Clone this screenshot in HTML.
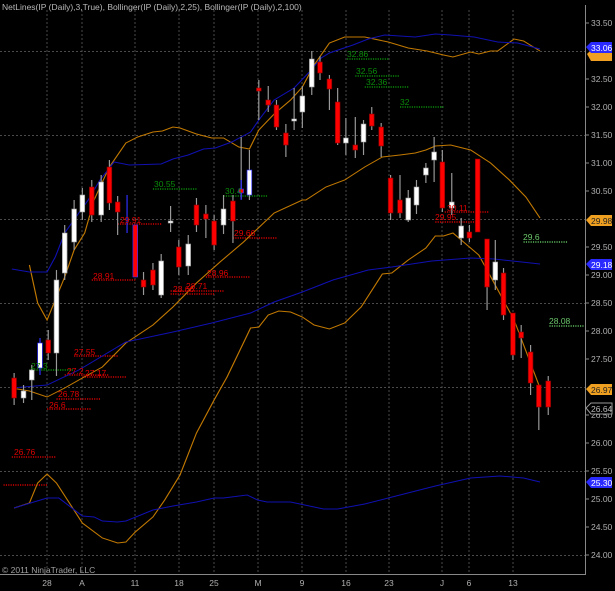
<!DOCTYPE html>
<html><head><meta charset="utf-8"><style>
html,body{margin:0;padding:0;background:#000;}
svg{display:block;font-family:"Liberation Sans",sans-serif;}
</style></head><body>
<svg width="615" height="591" viewBox="0 0 615 591" xmlns="http://www.w3.org/2000/svg">
<rect width="615" height="591" fill="#000"/>
<!-- grid -->
<g stroke="#4a4a4a" stroke-width="1" stroke-dasharray="2,2">
<line x1="47" y1="10" x2="47" y2="574"/><line x1="82" y1="10" x2="82" y2="574"/><line x1="135" y1="10" x2="135" y2="574"/><line x1="179" y1="10" x2="179" y2="574"/><line x1="214" y1="10" x2="214" y2="574"/><line x1="258" y1="10" x2="258" y2="574"/><line x1="302" y1="10" x2="302" y2="574"/><line x1="346" y1="10" x2="346" y2="574"/><line x1="389" y1="10" x2="389" y2="574"/><line x1="442" y1="10" x2="442" y2="574"/><line x1="469" y1="10" x2="469" y2="574"/><line x1="513" y1="10" x2="513" y2="574"/>
<line x1="0" y1="51.5" x2="585" y2="51.5"/><line x1="0" y1="135.5" x2="585" y2="135.5"/><line x1="0" y1="219.5" x2="585" y2="219.5"/><line x1="0" y1="303.5" x2="585" y2="303.5"/><line x1="0" y1="387.5" x2="585" y2="387.5"/><line x1="0" y1="471.5" x2="585" y2="471.5"/><line x1="0" y1="555.5" x2="585" y2="555.5"/>
</g>
<line x1="585.5" y1="5" x2="585.5" y2="575" stroke="#888"/>
<line x1="0" y1="574.5" x2="586" y2="574.5" stroke="#888"/>
<g transform="scale(1.17647,1)">
<!-- netlines dotted -->
<g stroke-width="1.5" stroke-dasharray="1,1" fill="none">
<g stroke="#d00000">
<line x1="100" y1="224" x2="138" y2="224"/><line x1="198" y1="238" x2="235" y2="238"/><line x1="78" y1="280" x2="115" y2="280"/><line x1="175" y1="277" x2="212" y2="277"/><line x1="145" y1="291" x2="190" y2="291"/><line x1="145" y1="294" x2="182" y2="294"/><line x1="63" y1="356" x2="100" y2="356"/><line x1="55" y1="375" x2="92" y2="375"/><line x1="70" y1="377" x2="107" y2="377"/><line x1="48" y1="399" x2="86" y2="399"/><line x1="40" y1="409" x2="78" y2="409"/><line x1="10" y1="457" x2="48" y2="457"/><line x1="3" y1="485" x2="40" y2="485"/><line x1="378" y1="212" x2="415" y2="212"/><line x1="370" y1="222" x2="405" y2="222"/>
</g>
<g stroke="#0a8a0a">
<line x1="295" y1="59" x2="331" y2="59"/><line x1="302" y1="76" x2="340" y2="76"/><line x1="310" y1="87" x2="348" y2="87"/><line x1="340" y1="107" x2="377" y2="107"/><line x1="130" y1="189" x2="168" y2="189"/><line x1="190" y1="196" x2="227" y2="196"/><line x1="25" y1="370" x2="62" y2="370"/>
</g>
<g stroke="#5cb85c"><line x1="445" y1="242" x2="482" y2="242"/><line x1="467" y1="326" x2="497" y2="326"/></g>
</g>
<!-- bands -->
<g fill="none" stroke-width="1">
<polyline stroke="#c07800" points="25,265 32,303 40,320 48,297 55,277 63,250 72,233 80,200 85,187 93,167 107,143 117,137 130,132 138,131 147,127 153,128 167,134 180,138 190,138 203,147 212,149 220,130 233,114 247,100 257,87 267,65 280,43 293,37 310,37 330,42 347,48 363,51 377,55 385,57 400,52 407,54 417,51 423,51 437,39 445,41 459,51"/>
<polyline stroke="#c07800" points="10,388 25,391 40,397 55,388 70,378 87,367 107,343 130,325 147,307 167,283 187,262 207,242 233,213 257,200 260,200 277,187 293,180 310,167 325,157 340,155 353,153 362,150 370,146 383,145 400,150 417,163 433,180 447,197 459,218"/>
<polyline stroke="#c07800" points="12,508 25,503 32,483 40,474 48,483 70,523 87,538 100,543 107,542 115,532 130,517 140,500 153,475 167,433 182,400 193,377 213,328 220,327 228,315 237,311 247,312 257,317 267,325 280,329 293,323 307,307 325,274 333,273 347,260 362,248 370,236 377,236 385,233 407,255 420,283 437,320 459,388"/>
<polyline stroke="#1010b0" points="10,269 25,272 40,272 47,257 55,233 67,213 75,200 85,180 97,162 110,165 137,164 147,159 160,155 173,149 183,148 197,142 213,132 220,120 233,100 250,88 263,72 273,58 280,53 300,45 313,39 327,35 353,37 370,34 383,35 403,37 423,42 440,43 459,49"/>
<polyline stroke="#1010b0" points="10,388 40,385 67,370 107,342 127,337 147,332 180,323 213,313 233,302 257,292 283,280 313,270 333,267 367,261 400,258 420,259 459,264"/>
<polyline stroke="#1010b0" points="12,508 40,498 50,498 70,516 80,517 87,521 100,522 107,521 130,510 147,506 167,502 182,498 190,498 210,495 219,500 227,502 247,502 263,506 275,509 287,509 310,504 330,498 370,486 400,478 425,476 445,478 459,482"/>
</g>
<!-- wicks -->
<g stroke="#9a9a9a" stroke-width="1">
<line x1="12" y1="373" x2="12" y2="405"/><line x1="20" y1="385" x2="20" y2="403"/><line x1="27" y1="365" x2="27" y2="400"/><line x1="41" y1="330" x2="41" y2="360"/><line x1="48" y1="270" x2="48" y2="376"/><line x1="55" y1="225" x2="55" y2="280"/><line x1="63" y1="200" x2="63" y2="250"/><line x1="70" y1="188" x2="70" y2="220"/><line x1="78" y1="180" x2="78" y2="222"/><line x1="86" y1="175" x2="86" y2="222"/><line x1="93" y1="160" x2="93" y2="210"/><line x1="100" y1="196" x2="100" y2="235"/><line x1="122" y1="272" x2="122" y2="295"/><line x1="130" y1="263" x2="130" y2="290"/><line x1="137" y1="254" x2="137" y2="298"/><line x1="145" y1="206" x2="145" y2="232"/><line x1="152" y1="240" x2="152" y2="275"/><line x1="160" y1="235" x2="160" y2="275"/><line x1="167" y1="198" x2="167" y2="232"/><line x1="175" y1="205" x2="175" y2="238"/><line x1="182" y1="215" x2="182" y2="250"/><line x1="190" y1="195" x2="190" y2="234"/><line x1="198" y1="195" x2="198" y2="243"/><line x1="205" y1="137" x2="205" y2="199"/><line x1="212" y1="150" x2="212" y2="200"/><line x1="220" y1="80" x2="220" y2="120"/><line x1="228" y1="86" x2="228" y2="112"/><line x1="235" y1="100" x2="235" y2="130"/><line x1="243" y1="124" x2="243" y2="157"/><line x1="250" y1="88" x2="250" y2="130"/><line x1="257" y1="86" x2="257" y2="128"/><line x1="265" y1="51" x2="265" y2="95"/><line x1="272" y1="56" x2="272" y2="80"/><line x1="280" y1="75" x2="280" y2="110"/><line x1="287" y1="88" x2="287" y2="145"/><line x1="294" y1="118" x2="294" y2="155"/><line x1="302" y1="117" x2="302" y2="158"/><line x1="309" y1="120" x2="309" y2="155"/><line x1="316" y1="107" x2="316" y2="130"/><line x1="324" y1="123" x2="324" y2="157"/><line x1="332" y1="175" x2="332" y2="220"/><line x1="340" y1="175" x2="340" y2="218"/><line x1="347" y1="190" x2="347" y2="222"/><line x1="354" y1="180" x2="354" y2="214"/><line x1="362" y1="163" x2="362" y2="183"/><line x1="369" y1="137" x2="369" y2="182"/><line x1="376" y1="150" x2="376" y2="212"/><line x1="384" y1="173" x2="384" y2="215"/><line x1="392" y1="218" x2="392" y2="245"/><line x1="399" y1="225" x2="399" y2="242"/><line x1="414" y1="239" x2="414" y2="310"/><line x1="421" y1="240" x2="421" y2="290"/><line x1="428" y1="268" x2="428" y2="320"/><line x1="436" y1="313" x2="436" y2="360"/><line x1="443" y1="325" x2="443" y2="358"/><line x1="451" y1="345" x2="451" y2="395"/><line x1="458" y1="385" x2="458" y2="430"/><line x1="466" y1="376" x2="466" y2="415"/>
<line x1="108" y1="195" x2="108" y2="233" stroke="#3030ff"/><line x1="34" y1="338" x2="34" y2="375" stroke="#3030ff"/><line x1="205" y1="180" x2="205" y2="200" stroke="#3030ff"/>
</g>
<!-- bodies -->
<g stroke-width="0.6">
<g fill="#ff0000" stroke="#800">
<rect x="10" y="378" width="4" height="20"/><rect x="39" y="340" width="4" height="13"/><rect x="76" y="187" width="4" height="28"/><rect x="91" y="167" width="4" height="36"/><rect x="98" y="202" width="4" height="10"/><rect x="120" y="280" width="4" height="7"/><rect x="128" y="270" width="4" height="15"/><rect x="150" y="247" width="4" height="20"/><rect x="165" y="205" width="4" height="20"/><rect x="173" y="214" width="4" height="5"/><rect x="180" y="221" width="4" height="24"/><rect x="196" y="201" width="4" height="20"/><rect x="218" y="88" width="4" height="3"/><rect x="226" y="100" width="4" height="5"/><rect x="233" y="105" width="4" height="22"/><rect x="241" y="133" width="4" height="12"/><rect x="270" y="62" width="4" height="11"/><rect x="278" y="79" width="4" height="10"/><rect x="285" y="102" width="4" height="41"/><rect x="300" y="145" width="4" height="5"/><rect x="314" y="114" width="4" height="12"/><rect x="322" y="127" width="4" height="19"/><rect x="330" y="178" width="4" height="35"/><rect x="338" y="200" width="4" height="13"/><rect x="374" y="162" width="4" height="46"/><rect x="397" y="232" width="4" height="6"/><rect x="404" y="159" width="4" height="73"/><rect x="412" y="239" width="4" height="48"/><rect x="426" y="273" width="4" height="42"/><rect x="434" y="313" width="4" height="42"/><rect x="441" y="332" width="4" height="6"/><rect x="449" y="352" width="4" height="31"/><rect x="456" y="385" width="4" height="22"/><rect x="464" y="381" width="4" height="26"/>
<rect x="113" y="225" width="4" height="52" stroke="#3030ff"/><rect x="203" y="189" width="4" height="4" stroke="#3030ff"/>
</g>
<g fill="#ffffff" stroke="#999">
<rect x="18" y="391" width="4" height="7"/><rect x="25" y="370" width="4" height="10"/><rect x="46" y="280" width="4" height="73"/><rect x="53" y="233" width="4" height="40"/><rect x="61" y="209" width="4" height="33"/><rect x="68" y="195" width="4" height="17"/><rect x="84" y="182" width="4" height="33"/><rect x="135" y="261" width="4" height="34"/><rect x="143" y="221" width="4" height="2"/><rect x="158" y="244" width="4" height="22"/><rect x="188" y="209" width="4" height="16"/><rect x="248" y="119" width="4" height="2"/><rect x="255" y="96" width="4" height="16"/><rect x="263" y="59" width="4" height="28"/><rect x="292" y="138" width="4" height="5"/><rect x="307" y="124" width="4" height="18"/><rect x="345" y="198" width="4" height="22"/><rect x="352" y="187" width="4" height="18"/><rect x="360" y="168" width="4" height="7"/><rect x="367" y="152" width="4" height="8"/><rect x="382" y="202" width="4" height="6"/><rect x="390" y="226" width="4" height="12"/><rect x="419" y="262" width="4" height="18"/>
<rect x="32" y="343" width="4" height="25" stroke="#3030ff"/><rect x="210" y="170" width="4" height="25" stroke="#3030ff"/>
</g>
</g>
</g>
<!-- netline labels -->
<g font-size="8.5" fill="#e00000">
<text x="120" y="223">29.91</text><text x="234" y="236">29.66</text><text x="93" y="279">28.91</text><text x="207" y="276">28.96</text><text x="173" y="292">28.66</text><text x="186" y="289">28.71</text><text x="74" y="355">27.55</text><text x="67" y="374">27.2</text><text x="85" y="376">27.17</text><text x="58" y="397">26.78</text><text x="49" y="408">26.6</text><text x="14" y="455">26.76</text><text x="447" y="211">30.11</text><text x="435" y="220">29.95</text>
</g>
<g font-size="8.5" fill="#0a8a0a">
<text x="347" y="57">32.86</text><text x="356" y="74">32.56</text><text x="366" y="85">32.36</text><text x="400" y="105">32</text><text x="154" y="187">30.55</text><text x="225" y="194">30.4</text><text x="31" y="369">27.3</text>
</g>
<g font-size="8.5" fill="#6cc86c"><text x="523" y="240">29.6</text><text x="549" y="324">28.08</text></g>
<!-- axis labels -->
<g font-size="8.5" fill="#b0b0b0" stroke="none">
<text x="591" y="26">33.50</text><text x="591" y="82">32.50</text><text x="591" y="110">32.00</text><text x="591" y="138">31.50</text><text x="591" y="166">31.00</text><text x="591" y="194">30.50</text><text x="591" y="250">29.50</text><text x="591" y="278">29.00</text><text x="591" y="306">28.50</text><text x="591" y="334">28.00</text><text x="591" y="362">27.50</text><text x="591" y="418">26.50</text><text x="591" y="446">26.00</text><text x="591" y="474">25.50</text><text x="591" y="502">25.00</text><text x="591" y="530">24.50</text><text x="591" y="558">24.00</text>
</g>
<g stroke="#888"><line x1="585" y1="23" x2="589" y2="23"/><line x1="585" y1="79" x2="589" y2="79"/><line x1="585" y1="107" x2="589" y2="107"/><line x1="585" y1="135" x2="589" y2="135"/><line x1="585" y1="163" x2="589" y2="163"/><line x1="585" y1="191" x2="589" y2="191"/><line x1="585" y1="247" x2="589" y2="247"/><line x1="585" y1="275" x2="589" y2="275"/><line x1="585" y1="303" x2="589" y2="303"/><line x1="585" y1="331" x2="589" y2="331"/><line x1="585" y1="359" x2="589" y2="359"/><line x1="585" y1="415" x2="589" y2="415"/><line x1="585" y1="443" x2="589" y2="443"/><line x1="585" y1="471" x2="589" y2="471"/><line x1="585" y1="499" x2="589" y2="499"/><line x1="585" y1="527" x2="589" y2="527"/><line x1="585" y1="555" x2="589" y2="555"/></g>
<!-- badges -->
<polygon points="587,54 591,50 612,50 612,61 591,61" fill="#f0a020"/>
<polygon points="586,47 591,42 612,42 612,53 591,53" fill="#2a2aff"/>
<text x="591" y="51" font-size="8.5" fill="#fff">33.06</text>
<polygon points="586,220 591,215 612,215 612,226 591,226" fill="#f0a020"/><text x="591" y="224" font-size="8.5" fill="#222">29.98</text>
<polygon points="586,264 591,259 612,259 612,270 591,270" fill="#2a2aff"/><text x="591" y="268" font-size="8.5" fill="#fff">29.18</text>
<polygon points="586,389 591,384 612,384 612,395 591,395" fill="#f0a020"/><text x="591" y="393" font-size="8.5" fill="#222">26.97</text>
<polygon points="586,408 591,403 612,403 612,414 591,414" fill="#000" stroke="#999"/><text x="591" y="412" font-size="8.5" fill="#bbb">26.64</text>
<polygon points="586,482 591,477 612,477 612,488 591,488" fill="#2a2aff"/><text x="591" y="486" font-size="8.5" fill="#fff">25.30</text>
<!-- dates -->
<g font-size="8.5" fill="#b0b0b0" text-anchor="middle">
<text x="47" y="586">28</text><text x="82" y="586">A</text><text x="135" y="586">11</text><text x="179" y="586">18</text><text x="214" y="586">25</text><text x="258" y="586">M</text><text x="302" y="586">9</text><text x="346" y="586">16</text><text x="389" y="586">23</text><text x="442" y="586">J</text><text x="469" y="586">6</text><text x="513" y="586">13</text>
</g>
<text x="2" y="10" font-size="8.5" fill="#b8b8b8">NetLines(IP (Daily),3,True), Bollinger(IP (Daily),2,25), Bollinger(IP (Daily),2,100)</text>
<text x="2" y="573" font-size="8.5" fill="#a0a0a0">© 2011 NinjaTrader, LLC</text>
</svg>
</body></html>
